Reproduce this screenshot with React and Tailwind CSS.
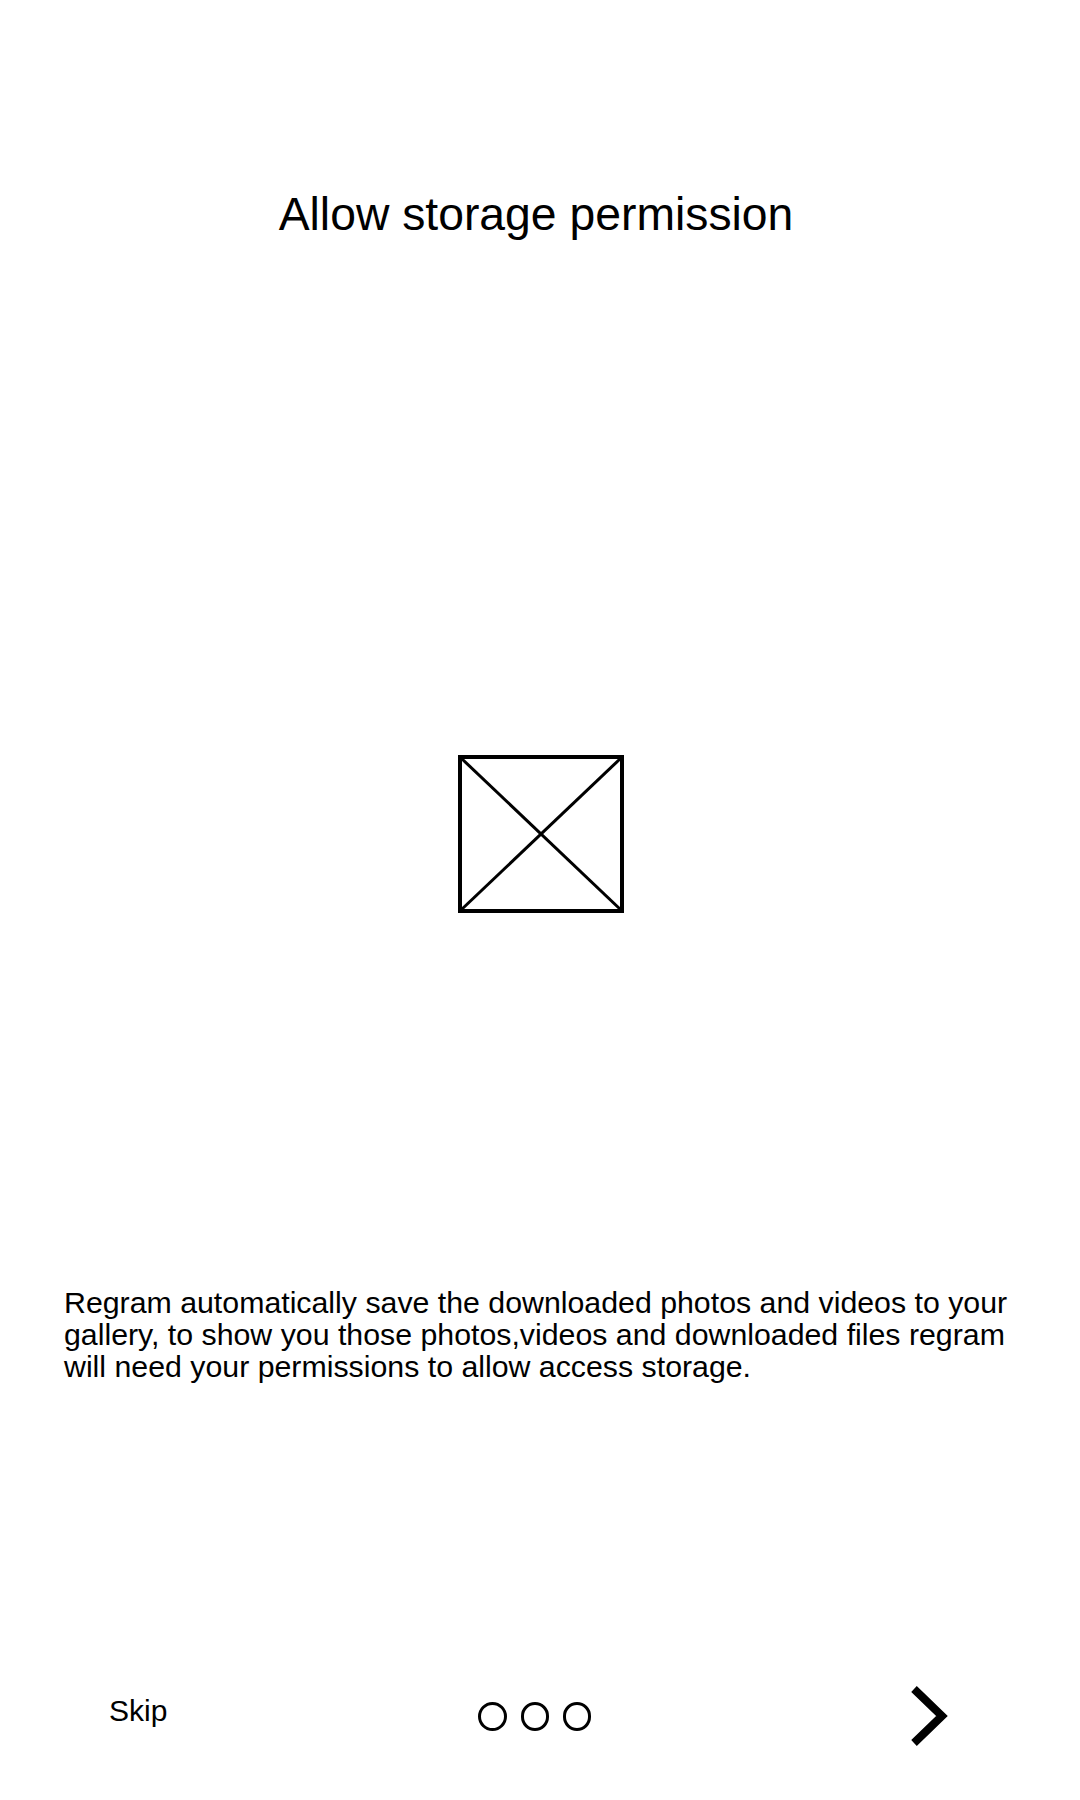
export default function App() {
  return (
    <div
      className="w-[1080px] h-[1800px] bg-white text-black flex flex-col"
      style={{ fontFamily: '"Liberation Sans", Arial, sans-serif' }}
    >
      <h1 className="mt-[188px] text-center text-[46.3px] leading-[52px] font-normal pr-[8px]">
        Allow storage permission
      </h1>

      <div className="mt-[515px] flex justify-center">
        <svg width="166" height="158" viewBox="0 0 166 158" className="ml-[1px]">
          <rect x="2" y="2" width="162" height="154" fill="none" stroke="#000" strokeWidth="4" />
          <line x1="3" y1="3" x2="163" y2="155" stroke="#000" strokeWidth="3" />
          <line x1="163" y1="3" x2="3" y2="155" stroke="#000" strokeWidth="3" />
        </svg>
      </div>

      <p className="mt-[374px] px-[64px] text-[30.3px] leading-[32px]">
        Regram automatically save the downloaded photos and videos to your gallery, to show you those photos,videos and downloaded files regram will need your permissions to allow access storage.
      </p>

      <div className="mt-[293px] h-[80px] flex items-center pl-[109px]">
        <div className="w-[369px] text-[30px] leading-[34px] mb-[10px]">Skip</div>
        <div className="flex gap-[14px]">
          <div className="w-[29px] h-[29px] rounded-full border-[3px] border-black" />
          <div className="w-[28px] h-[29px] rounded-full border-[3px] border-black" />
          <div className="w-[28px] h-[29px] rounded-full border-[3px] border-black" />
        </div>
        <div className="ml-[318px] flex items-center">
          <svg width="40" height="64" viewBox="0 0 40 64">
            <polyline points="5,5 33,32 5,59" fill="none" stroke="#000" strokeWidth="8" strokeLinejoin="miter" />
          </svg>
        </div>
      </div>
    </div>
  );
}
